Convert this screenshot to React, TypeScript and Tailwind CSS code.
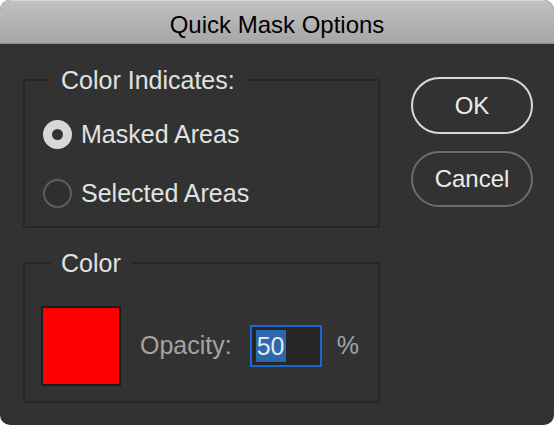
import React from "react";

const font = { fontFamily: '"Liberation Sans", Arial, sans-serif' };

function Radio({ checked, label }: { checked?: boolean; label: string }) {
  return (
    <label className="flex items-center gap-[9px] h-[30px]">
      {checked ? (
        <span className="w-[29px] h-[29px] rounded-full bg-[#d8d8d8] flex items-center justify-center">
          <span className="w-[11px] h-[11px] rounded-full bg-[#323232]" />
        </span>
      ) : (
        <span className="w-[29px] h-[29px] rounded-full border-2 border-[#5e5e5e] bg-[#2f2f2f]" />
      )}
      <span className="text-[25px] leading-[30px] text-[#e2e2e2]">{label}</span>
    </label>
  );
}

export default function App() {
  return (
    <div className="w-[554px] h-[425px] bg-white" style={font}>
      <div className="w-[554px] h-[425px] rounded-[10px] overflow-hidden bg-[#323232] flex flex-col">
        {/* Title bar */}
        <div className="h-[44px] shrink-0 bg-gradient-to-b from-[#c2c1c2] to-[#a7a6a7] border-t border-[#d6d6d6] border-b border-b-[#8a8a8a] flex items-center justify-center pt-[5px]">
          <span className="text-[24px] text-black leading-none">Quick Mask Options</span>
        </div>

        {/* Body */}
        <div className="flex pl-[23px] pt-[22px]">
          {/* Left column */}
          <div className="w-[357px] flex flex-col gap-[21px]">
            <fieldset className="border-2 border-[#262626]">
              <legend className="ml-[26px] px-[10px] text-[25px] leading-[28px] text-[#e2e2e2]">
                Color Indicates:
              </legend>
              <div className="flex flex-col gap-[29px] pl-[18px] pt-[25px] pb-[18px]">
                <Radio checked label="Masked Areas" />
                <Radio label="Selected Areas" />
              </div>
            </fieldset>

            <fieldset className="border-2 border-[#262626]">
              <legend className="ml-[26px] px-[10px] text-[25px] leading-[28px] text-[#e2e2e2]">
                Color
              </legend>
              <div className="flex items-center pl-[16px] pt-[29px] pb-[15px]">
                <div className="w-[80px] h-[80px] border-2 border-[#1b1b1b] bg-[#ff0000]" />
                <span className="ml-[19px] text-[25px] text-[#a3a3a3]">Opacity:</span>
                <div className="ml-[18px] w-[72px] h-[42px] border-2 border-[#1a66d6] bg-[#262626] flex items-center pl-[4px]">
                  <span className="bg-[#2b68ad] text-[25px] leading-[32px] text-[#e8e8e8] px-[1px]">50</span>
                </div>
                <span className="ml-[15px] text-[25px] text-[#a3a3a3]">%</span>
              </div>
            </fieldset>
          </div>

          {/* Buttons */}
          <div className="ml-[31px] pt-[11px] flex flex-col gap-[17px]">
            <button className="w-[122px] h-[57px] rounded-full border-2 border-[#d9d9d9] text-[24px] text-[#ececec]">
              OK
            </button>
            <button className="w-[122px] h-[56px] rounded-full border-2 border-[#6c6c6c] text-[24px] text-[#ececec]">
              Cancel
            </button>
          </div>
        </div>
      </div>
    </div>
  );
}
